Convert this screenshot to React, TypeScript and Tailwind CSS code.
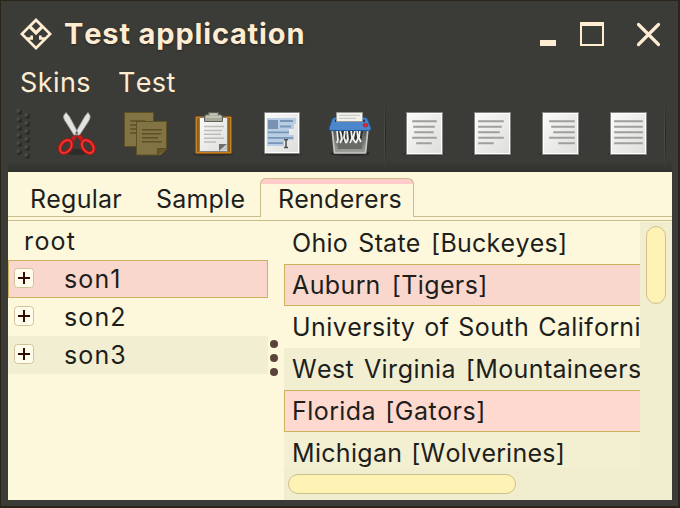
import type { ReactNode } from "react";

const listRows = [
  { text: "Ohio State [Buckeyes]", row: "bg-[#fdf8dc] tracking-[0.27px] [word-spacing:3px]" },
  { text: "Auburn [Tigers]", row: "bg-[#fad7cd] shadow-[inset_1px_1px_#c9b35e,inset_0_-1px_#c9b35e] tracking-[0.4px] [word-spacing:3.5px]" },
  { text: "University of South California [Trojans]", row: "bg-[#fdf8dc] tracking-[0.43px] [word-spacing:1.5px]" },
  { text: "West Virginia [Mountaineers]", row: "bg-[#f2eed1] tracking-[0.36px] [word-spacing:2.6px]" },
  { text: "Florida [Gators]", row: "bg-[#fdd9cf] shadow-[inset_1px_1px_#c9b35e,inset_0_-1px_#c9b35e] tracking-[0.5px] [word-spacing:1.5px]" },
  { text: "Michigan [Wolverines]", row: "bg-[#f3efd1] tracking-[0.3px] [word-spacing:1.5px]" },
];

const treeRows = [
  { text: "son1", row: "bg-[#fad7cd] border border-[#c9b35e]" },
  { text: "son2", row: "border border-transparent" },
  { text: "son3", row: "bg-[#f2eed1] border border-[#f2eed1]" },
];

function ToolIcon({ x, children }: { x: number; children: ReactNode }) {
  return (
    <svg className="h-[60px] w-[68px] shrink-0" viewBox={`${x} 104 68 60`}>
      {children}
    </svg>
  );
}

function PageIcon({ x, lines }: { x: number; lines: number[][] }) {
  return (
    <ToolIcon x={x - 15}>
      <ellipse cx={x + 18} cy="154" rx="21" ry="2" fill="#2c2b28" opacity=".7" />
      <rect x={x + 0.5} y="112.5" width="36" height="42" fill="#fff" stroke="#858583" />
      <rect x={x + 2} y="114" width="33" height="39" fill="url(#paper)" />
      {lines.map(([a, b], i) => (
        <g key={i}>
          <rect x={x + a} y={120 + i * 5.5} width={b - a} height="2.5" fill="#c4c4c2" />
          <rect x={x + a + 0.5} y={120.5 + i * 5.5} width={b - a - 1} height="1.5" fill="#a0a09f" />
        </g>
      ))}
    </ToolIcon>
  );
}

function Separator() {
  return (
    <div className="flex h-[64px] w-2 shrink-0 self-center pl-px">
      <div className="w-px bg-linear-to-b from-[#3b3b38] via-[#4d4d49] to-[#3b3b38]" />
      <div className="w-px bg-linear-to-b from-[#3b3b38] via-[#252521] to-[#3b3b38]" />
    </div>
  );
}

export default function App() {
  return (
    <div className="flex h-[508px] w-[680px] flex-col overflow-hidden border-t border-r-2 border-b-2 border-l border-[#2b2418] bg-[#3b3b38] pr-1.5 pb-1.5 pl-[7px] font-['Inter',sans-serif] text-[25px] leading-none text-[#1e1e1c] [font-kerning:none]">
      <header className="flex h-[66px] shrink-0 items-center text-[#ffedd2]">
        <svg className="ml-3 h-8 w-8 shrink-0" viewBox="20 18 32 32">
          <path
            fill="currentColor"
            fillRule="evenodd"
            d="M36 18 52 34 36 50 20 34ZM36 22 40.3 26.3 36 30.6 31.7 26.3ZM29.3 28.5 23.8 34 27.1 37.3H30.3V35.6H33V39.8H29.6L36 46.2 42.4 39.8H39V35.6H41.7V37.3H44.9L48.2 34 42.7 28.5 36 35.2Z"
          />
        </svg>
        <h1 className="mb-px ml-[12px] text-[29px] font-bold tracking-[0.85px] whitespace-nowrap [text-shadow:0_1px_2px_#24231f]">Test application</h1>
        <svg className="mr-2 ml-auto h-8 w-[126px] shrink-0" viewBox="538 18 126 32">
          <path fill="currentColor" d="M540 40h16v6h-16zM580 22h24v24h-24zM582 26v18h20V26z" fillRule="evenodd" />
          <path d="m638.5 24.5 20 20m0-20-20 20" stroke="currentColor" strokeWidth="3.2" strokeLinecap="round" />
        </svg>
      </header>
      <nav className="flex h-[33px] shrink-0 items-center gap-[27px] pb-0.5 pl-3 text-[27px] text-[#ffedd2]">
        <span className="tracking-[0.4px]">Skins</span>
        <span className="tracking-[0.4px]">Test</span>
      </nav>
      <div className="flex h-[72px] shrink-0 items-center bg-linear-to-b from-[#3b3b38] from-85% to-[#30302d] pb-1">
        <svg className="h-[60px] w-[35px] shrink-0" viewBox="8 104 35 60">
          {Array.from({ length: 12 }, (_, i) => {
            const cx = i % 2 ? 26.7 : 18.7;
            const cy = (i % 2 ? 115.5 : 111.5) + Math.floor(i / 2) * 8;
            return (
              <g key={i}>
                <circle cx={cx + 0.8} cy={cy + 0.8} r="2.4" fill="#252522" />
                <circle cx={cx - 0.5} cy={cy - 0.5} r="2" fill="#484844" />
              </g>
            );
          })}
        </svg>
        <ToolIcon x={43}>
          <defs>
            <linearGradient id="paper" x2="1" y2="1">
              <stop stopColor="#fafaf8" />
              <stop offset="1" stopColor="#dededc" />
            </linearGradient>
            <linearGradient id="bin" y2="1" x2="0">
              <stop stopColor="#4b4d49" />
              <stop offset="1" stopColor="#a1a39e" />
            </linearGradient>
          </defs>
          <ellipse cx="78" cy="152" rx="14" ry="3" fill="#292925" opacity=".8" />
          <path d="m66 112.5-2.3 3.2c-.6 2 .8 4.6 2.6 7l8 12.8 4-2-8.8-16.8zM88 112.5l2 3.2c.5 2-.8 4.5-2.4 7l-8.4 12.8-4-2 9.6-17z" fill="#e2e2df" stroke="#aaa9a7" strokeWidth=".8" />
          <path d="m72.5 140 3-4.5m6.5 4.5-3.3-4.5" stroke="#c51b19" strokeWidth="4" />
          <g fill="none" stroke="#be1110" strokeWidth="3.8">
            <ellipse cx="65.8" cy="146.6" rx="5" ry="7.2" transform="rotate(38 65.8 146.6)" />
            <ellipse cx="87.8" cy="146.6" rx="5" ry="7.2" transform="rotate(-38 87.8 146.6)" />
          </g>
          <g fill="none" stroke="#ed3a34" strokeWidth="1.7">
            <ellipse cx="65.8" cy="146.6" rx="5" ry="7.2" transform="rotate(38 65.8 146.6)" />
            <ellipse cx="87.8" cy="146.6" rx="5" ry="7.2" transform="rotate(-38 87.8 146.6)" />
          </g>
          <circle cx="76.8" cy="134.5" r="1" fill="#999" />
        </ToolIcon>
        <ToolIcon x={111}>
          <g fill="#827345" stroke="#5f5024">
            <path d="M124.5 112.5h29v34h-29z" />
            <path d="M130 121h15m-15 4h13m-13 4h15m-15 4h13" strokeWidth="1.3" />
            <path d="M136.5 121.5h30V149l-6 6h-24z" />
            <path d="M142 129.8h20m-20 4h19m-19 4h16m-16 4h20" strokeWidth="1.6" />
            <path d="M157.5 154.5v-6h8.5z" fill="#655629" />
          </g>
        </ToolIcon>
        <ToolIcon x={179}>
          <ellipse cx="213.5" cy="154" rx="20" ry="2" fill="#292925" opacity=".7" />
          <rect x="195.5" y="116.5" width="36" height="37" rx="1" fill="#c88224" stroke="#93580a" />
          <path d="M198 118v34m31-34v34" stroke="#8e6121" strokeWidth="2" />
          <path d="M199.5 117.5h28v34h-28z" fill="url(#paper)" stroke="#83817c" />
          <path d="M204 126.5h20m-20 4h18m-18 3.8h17m-17 4h20m-20 3.7h12" stroke="#bcbcba" strokeWidth="1.5" />
          <path d="M219 151v-7h8z" fill="#6f706d" />
          <path d="m220 151 7-6v5z" fill="#c5c5c2" />
          <path d="M204.5 121.5V116l2-1.5h2v-2h10v2h2l2 1.5v5.5z" fill="#a5a898" stroke="#606257" />
          <path d="M206 117h15m-11-2.5h7" stroke="#c9cbbf" strokeWidth="1.4" />
        </ToolIcon>
        <ToolIcon x={247}>
          <ellipse cx="282" cy="154" rx="20" ry="2" fill="#292925" opacity=".7" />
          <path d="M264.5 112.5h35v41h-35z" fill="#fff" stroke="#858583" />
          <path d="M266 114h32v38h-32z" fill="url(#paper)" />
          <path d="M267 118h29v6h-2v5h-5v6h5v5h-10v6h-17z" fill="#b9cee5" />
          <path d="M268 120h10v9h-10z" fill="#7893b2" />
          <path d="M280 121h13m-13 5.5h11m-23 5.8h21m-21 5.5h25m-25 5.4h15" stroke="#7995b6" strokeWidth="1.8" />
          <path d="M284 139.5c1.3 0 2 .5 2 1.3v5.7c0 .7-.7 1.1-2 1.1m4-8.1c-1.3 0-2 .5-2 1.3v5.7c0 .7.7 1.1 2 1.1" stroke="#4c4f52" strokeWidth="1.5" fill="none" />
        </ToolIcon>
        <ToolIcon x={315}>
          <ellipse cx="350" cy="153.5" rx="20" ry="2.5" fill="#24231f" opacity=".8" />
          <path d="M332 128h36l-2.5 25h-31z" fill="url(#bin)" stroke="#c6c6c3" strokeWidth="1.7" />
          <path d="M336 130h28l-2 19h-24z" fill="#686b66" />
          <path d="M336.5 130 338 143l3-8 3 8 3-9 3 9 3-9 3 9 3-9 2 8 2-11z" fill="#292d2b" />
          <path d="m337 130 1 10-1 3m3-13 2 9-2 4m5-13-1 8 2 5m1-13 1 9-2 4m5-13 1 8-2 5m5-13-2 9 3 4m1-13 1 8-2 5m4-13-1 8 2 4" stroke="#f0f0ed" strokeWidth="1.8" fill="none" />
          <path d="m335 117.5-2.5 1-3.2 9c-.6 2 .3 3 1.7 3h38c1.7 0 2.3-1 1.6-3l-3.4-9-2.2-1z" fill="#4c86cb" stroke="#20599e" />
          <path d="M335 119.5h30v2.5h-30z" fill="#173b68" />
          <path d="M336.5 112.5h26v9h-26z" fill="#f0f0ed" stroke="#999993" />
          <path d="M339 115.3h21m-21 3h17" stroke="#c1c2be" />
          <ellipse cx="365.5" cy="125.2" rx="2.3" ry="1.8" fill="#e7272b" stroke="#9a2438" strokeWidth=".8" />
        </ToolIcon>
        <Separator />
        <PageIcon x={406} lines={[[6, 31], [7, 29], [8, 28], [6, 31], [10, 26]]} />
        <PageIcon x={474} lines={[[4, 30], [4, 28], [4, 26], [4, 30], [4, 20]]} />
        <PageIcon x={542} lines={[[7, 33], [9, 33], [11, 33], [7, 33], [16, 33]]} />
        <PageIcon x={610} lines={[[4, 33], [4, 33], [4, 33], [4, 33], [4, 33]]} />
        <Separator />
      </div>
      <main className="flex min-h-0 flex-1 flex-col bg-[#fdf8dc]">
        <div className="flex h-[45px] shrink-0 pt-1.5 tracking-[0.23px]">
          <div className="flex w-[252px] items-center gap-[34px] border-b border-[#c9bd8c] pt-[5px] pl-[22px]">
            <span>Regular</span>
            <span>Sample</span>
          </div>
          <div className="flex w-[154px] items-center overflow-hidden rounded-t-md border-x border-t border-[#c9bd8c] bg-linear-to-b from-[#ffccca] from-[5px] to-[#fdf8dc] to-[5px] pt-[3px] pl-[17px]">Renderers</div>
          <div className="flex-1 border-b border-[#c9bd8c]" />
        </div>
        <div className="h-1 shrink-0 border-b border-[#c9bd8c]" />
        <div className="flex min-h-0 flex-1 pt-px">
          <aside className="w-[260px] shrink-0 tracking-[1.1px]">
            <div className="flex h-[38px] items-center pl-4">root</div>
            {treeRows.map((r) => (
              <div key={r.text} className={`flex h-[38px] items-center pl-[5px] ${r.row}`}>
                <svg className="mb-[3px] h-5 w-5" viewBox="0 0 20 20">
                  <rect x=".5" y=".5" width="19" height="19" rx="3" fill="#fffceb" stroke="#cfc49b" />
                  <path d="M4 10h12M10 4v12" stroke="#2d0d05" strokeWidth="2" />
                </svg>
                <span className="ml-[30px]">{r.text}</span>
              </div>
            ))}
          </aside>
          <div className="flex w-4 shrink-0 flex-col items-center gap-1.5 pt-[118px] pr-1">
            <i className="size-2 rounded-full bg-[#59433a]" />
            <i className="size-2 rounded-full bg-[#59433a]" />
            <i className="size-2 rounded-full bg-[#59433a]" />
          </div>
          <section className="flex min-w-0 flex-1 bg-[#f1edcf]">
            <div className="flex w-[356px] shrink-0 flex-col">
              <div className="h-[246px] shrink-0 overflow-hidden">
                {listRows.map((r) => (
                  <div key={r.text} className={`flex h-[42px] items-center pl-2 whitespace-nowrap ${r.row}`}>{r.text}</div>
                ))}
              </div>
              <div className="pt-1.5 pl-1">
                <div className="h-5 w-[228px] rounded-full border border-[#cfc18d] bg-[#fff2b5]" />
              </div>
            </div>
            <div className="pt-1 pl-1.5">
              <div className="h-[78px] w-5 rounded-full border border-[#cfc18d] bg-[#fff2b5]" />
            </div>
          </section>
        </div>
      </main>
    </div>
  );
}
